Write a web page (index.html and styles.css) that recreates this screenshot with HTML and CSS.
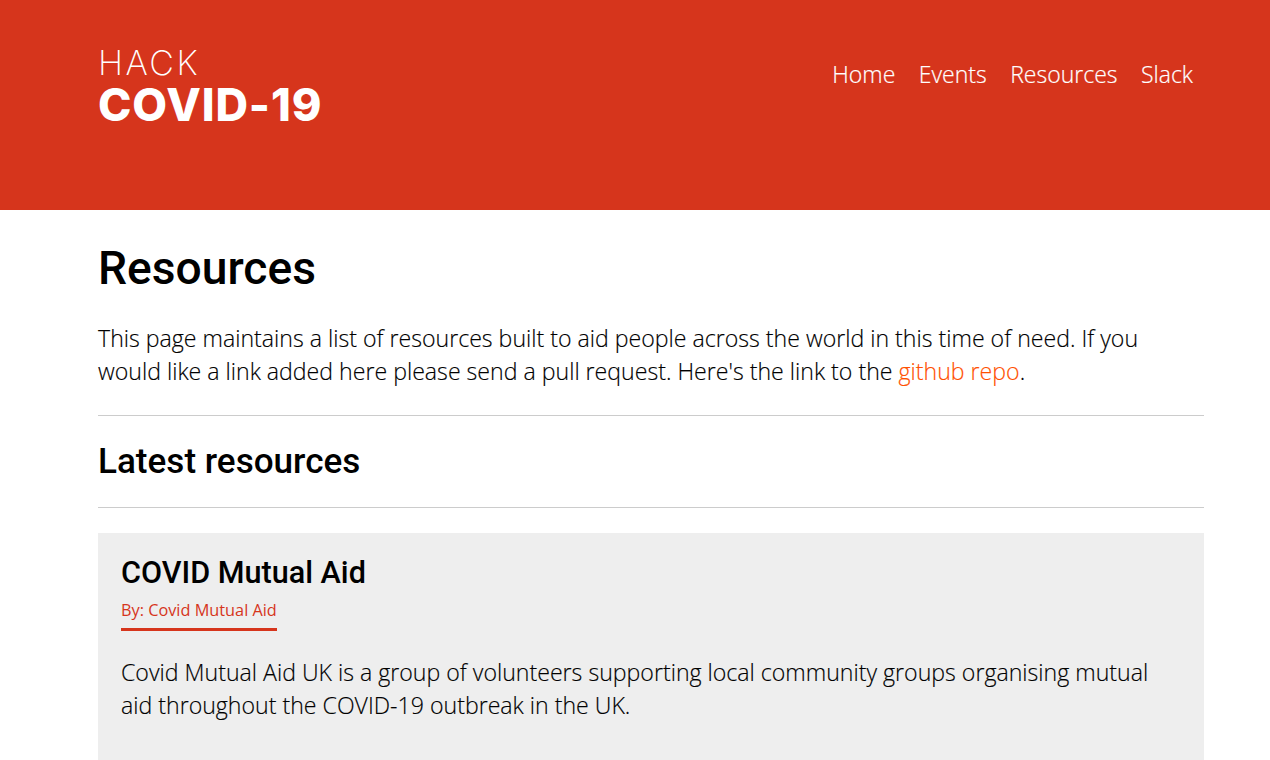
FILE: index.html
```html
<!DOCTYPE html>
<html>

	<head lang="en">
		<meta charset="UTF-8">
		<title>Resources</title>
		<link rel="stylesheet" href="styles.css">
	</head>

	<body>
		<header class="header">
			<a class="logo">
				<span class="logo-top">HACK</span>
				<span class="logo-main">COVID-19</span>
			</a>
			<nav class="nav">
				<a>Home</a>
				<a>Events</a>
				<a>Resources</a>
				<a>Slack</a>
			</nav>
		</header>
		<main class="content">
			<h1>Resources</h1>
			<p class="intro">This page maintains a list of resources built to aid people across the world in this time of need. If you would like a link added here please send a pull request. Here's the link to the <a class="link">github repo</a>.</p>
			<h2 class="section-title">Latest resources</h2>
			<article class="card">
				<h3>COVID Mutual Aid</h3>
				<div class="byline">By: Covid Mutual Aid</div>
				<p>Covid Mutual Aid UK is a group of volunteers supporting local community groups organising mutual aid throughout the COVID-19 outbreak in the UK.</p>
			</article>
		</main>
	</body>

</html>
```

FILE: styles.css
```css
* {
	margin: 0;
	padding: 0;
	box-sizing: border-box;
}

html,
body {
	height: 760px;
	overflow: hidden;
}

body {
	font-family: "Open Sans", sans-serif;
	font-weight: 300;
	color: #000;
	background-color: #fff;
}

.header {
	height: 210px;
	padding: 44px 77px 0 98px;
	display: flex;
	justify-content: space-between;
	align-items: flex-start;
	background-color: #d6351c;
	color: #fff;
}

.logo {
	display: flex;
	flex-direction: column;
}

.logo-top {
	font-family: Inter, sans-serif;
	font-size: 34px;
	font-weight: 250;
	line-height: 38px;
	letter-spacing: 2.4px;
}

.logo-main {
	font-family: Inter, sans-serif;
	font-size: 45px;
	font-weight: 850;
	line-height: 45px;
	letter-spacing: 0.9px;
}

.nav {
	display: flex;
	gap: 23.5px;
	padding-top: 13px;
	font-size: 23px;
	line-height: 35px;
	-webkit-text-stroke: 0.2px #fff;
}

.content {
	padding: 0 66px 0 98px;
}

h1 {
	margin-top: 32px;
	font-family: Roboto, sans-serif;
	font-size: 46.2px;
	font-weight: 500;
	line-height: 52px;
}

.intro {
	margin-top: 28px;
	padding-bottom: 27px;
	border-bottom: 1px solid #ccc;
	font-size: 23.13px;
	line-height: 33px;
	-webkit-text-stroke: 0.15px;
}

.link {
	color: #ff5000;
}

.section-title {
	padding: 23px 0;
	border-bottom: 1px solid #ccc;
	font-family: Roboto, sans-serif;
	font-size: 35.1px;
	font-weight: 500;
	line-height: 45px;
}

.card {
	height: 240px;
	margin-top: 25px;
	padding: 21px 23px;
	background-color: #eee;
}

h3 {
	font-family: Roboto, sans-serif;
	font-size: 30.6px;
	font-weight: 500;
	line-height: 38px;
}

.byline {
	display: inline-block;
	margin-top: 6px;
	padding-bottom: 6px;
	border-bottom: 3px solid #d6351c;
	color: #d6351c;
	font-size: 16.3px;
	font-weight: 400;
	line-height: 24px;
}

.card p {
	margin-top: 25px;
	font-size: 23.13px;
	line-height: 33px;
	-webkit-text-stroke: 0.15px;
}
```
